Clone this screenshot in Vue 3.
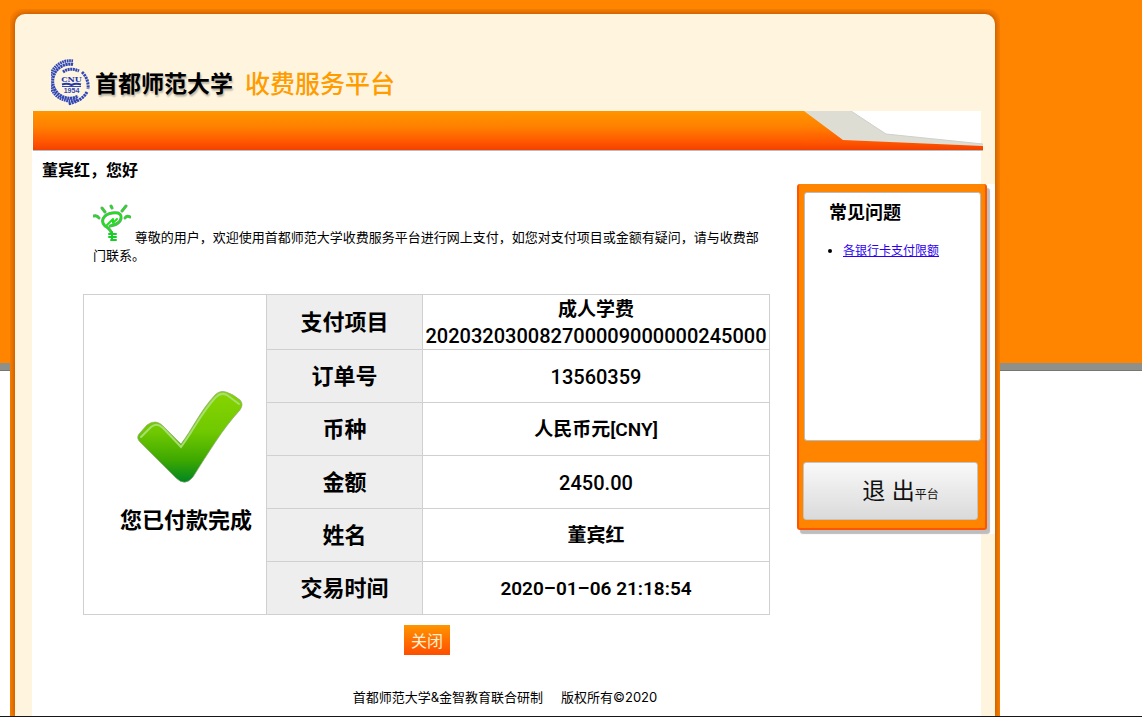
<script setup>
const rows = [
  { label: '支付项目', lines: ['成人学费', '202032030082700009000000245000'] },
  { label: '订单号', lines: ['13560359'] },
  { label: '币种', lines: ['人民币元[CNY]'] },
  { label: '金额', lines: ['2450.00'] },
  { label: '姓名', lines: ['董宾红'] },
  { label: '交易时间', lines: ['2020–01–06 21:18:54'] },
]

const isNumber = (line) => /^[\d.]+$/.test(line)
</script>

<template>
  <div class="page" lang="zh-CN">
    <div class="frame">
      <div class="paper">
        <header class="brand">
          <svg class="seal" viewBox="0 0 40 50" aria-hidden="true">
            <g fill="none" stroke="#3147b5">
              <path d="M22 4A20 20 0 1 0 27 42" stroke-width="3" stroke-dasharray="1.700 .6" />
              <path d="M22 7.500A17 17 0 1 0 27 39" stroke-width="3" stroke-dasharray="2.200 .5" />
              <path d="M12 15Q19 10 28 14" stroke-width="3" stroke-dasharray="2 .6" />
              <path d="M31 15Q38 22 37 32" stroke-width="3" stroke-dasharray="2.200 .8" />
              <path d="M36 35Q31 44 17 47" stroke-width="3" stroke-dasharray="2.200 .7" />
              <path d="M11 27.500Q16 26 20.500 28Q25 26 30 27.500" stroke="#2138ab" stroke-width="2" />
              <path d="M11 29.500h19" stroke-width="1" />
            </g>
            <text class="seal-name" x="20.500" y="25" text-anchor="middle">CNU</text>
            <text class="seal-year" x="20.500" y="36" text-anchor="middle">1954</text>
          </svg>
          <span class="school">首都师范大学</span>
          <span class="platform">收费服务平台</span>
        </header>

        <div class="sheet">
          <div class="band">
            <svg class="ribbon" viewBox="0 0 180 42" preserveAspectRatio="none" aria-hidden="true">
              <defs>
                <linearGradient id="band-fill" x1="0" y1="0" x2="0" y2="39" gradientUnits="userSpaceOnUse">
                  <stop offset="0" stop-color="#ff9500" />
                  <stop offset=".4" stop-color="#ff8000" />
                  <stop offset=".8" stop-color="#ff5600" />
                  <stop offset="1" stop-color="#f24100" />
                </linearGradient>
              </defs>
              <path d="M0 0H178V42H0z" fill="#fff" />
              <path d="M178 0H180V42H178z" fill="#fff5df" />
              <path d="M0 0H48L83 23L180 33V36H0z" fill="#deddd3" />
              <path d="M48 0L83 23L180 33" fill="none" stroke="#cfcfcb" />
              <path d="M0 39H180V40H0z" fill="#b9bcc0" />
              <path d="M0 0H1L40 29L180 35V39H0z" fill="url(#band-fill)" />
            </svg>
          </div>

          <div class="columns">
            <main class="main">
              <h1 class="greeting">董宾红，您好</h1>
              <p class="notice">
                <svg class="bulb" viewBox="0 0 38 38" aria-hidden="true">
                  <g fill="none" stroke-linecap="round" stroke-linejoin="round">
                    <g stroke="#7d9a85" stroke-width="3">
                      <path d="M1 12Q4 11 6 14M9 4L12 8M18 2L19 4M33 2L29 7M32 14Q34 11 37 13" />
                      <path d="M18 28Q17 25 12 22Q7 17 12 12Q17 8 25 9Q30 11 27 17Q24 21 17 22" />
                    </g>
                    <g stroke="#20e01e" stroke-width="2">
                      <path d="M1 12Q4 11 6 14M9 4L12 8M18 2L19 4M33 2L29 7M32 14Q34 11 37 13" />
                      <path d="M18 28Q17 25 12 22Q7 17 12 12Q17 8 25 9Q30 11 27 17Q24 21 17 22" />
                      <path d="M14 21L20 15V19L24 15" />
                      <path d="M16 30h7M16 33h7M18 36h5M19 28v8" stroke="#16cf26" />
                    </g>
                  </g>
                </svg>
                尊敬的用户，欢迎使用首都师范大学收费服务平台进行网上支付，如您对支付项目或金额有疑问，请与收费部门联系。
              </p>

              <table class="receipt">
                <colgroup>
                  <col class="col-status" />
                  <col class="col-label" />
                  <col />
                </colgroup>
                <tbody>
                  <tr v-for="(row, i) in rows" :key="row.label">
                    <td v-if="i === 0" class="status" :rowspan="rows.length">
                      <svg class="check" viewBox="-4 0 128 110" aria-hidden="true">
                        <defs>
                          <linearGradient id="check-fill" x1="0" y1="0" x2="0" y2="1">
                            <stop offset="0" stop-color="#88d500" />
                            <stop offset=".45" stop-color="#6fc800" />
                            <stop offset=".75" stop-color="#3fa900" />
                            <stop offset="1" stop-color="#008522" />
                          </linearGradient>
                        </defs>
                        <path d="M13 44Q10 48 14 52L50 88Q59 97 67 87C81 65 97 38 114 20Q118 14 114 10Q107 4 100 2Q94 0 89 5C74 21 66 40 55 54L38 37Q30 28 21 35Z" fill="url(#check-fill)" stroke="#8fa675" stroke-width=".7" />
                        <path d="M15 47L25 37Q31 32 37 38L55 57C69 38 75 23 90 7Q95 2 101 5L113 14" fill="none" stroke="#a7df70" stroke-width="2" stroke-linecap="round" />
                      </svg>
                      <div>您已付款完成</div>
                    </td>
                    <th class="label" scope="row">{{ row.label }}</th>
                    <td class="value">
                      <div v-for="line in row.lines" :key="line" :class="{ number: isNumber(line) }">{{ line }}</div>
                    </td>
                  </tr>
                </tbody>
              </table>
              <button class="close" type="button">关闭</button>
            </main>

            <aside class="side">
              <div class="panel">
                <section class="faq">
                  <h2>常见问题</h2>
                  <ul>
                    <li><a href="#">各银行卡支付限额</a></li>
                  </ul>
                </section>
                <button class="exit" type="button">退 出<small>平台</small></button>
              </div>
            </aside>
          </div>

          <footer class="footer">
            <span>首都师范大学&amp;金智教育联合研制</span>
            <span>版权所有©2020</span>
          </footer>
        </div>
      </div>
    </div>
  </div>
</template>

<style>
body {
  margin: 0;
}
</style>

<style scoped>
.page {
  box-sizing: border-box;
  min-height: 100vh;
  display: flex;
  padding: 9px 10px 0;
  border-bottom: 1px solid #15151c;
  background: linear-gradient(#ff8400 363px, #90908a 363px, #90908a 370px, #777771 370px, #777771 371px, #fff 371px);
  font-family: Inter, "Noto Sans CJK SC", sans-serif;
  color: #000;
}
.frame {
  box-sizing: border-box;
  display: flex;
  flex: 1;
  max-width: 990px;
  padding: 5px 5px 0;
  border-radius: 12px 12px 0 0;
  background: #fb8100;
  overflow: hidden;
}
.paper {
  box-sizing: border-box;
  flex: 1;
  display: flex;
  flex-direction: column;
  padding: 0 14px 0 17px;
  border-radius: 10px 10px 0 0;
  background: #fff5df;
  box-shadow: 0 0 6px 1px #b85000;
}
.brand {
  box-sizing: border-box;
  height: 97px;
  display: flex;
  align-items: center;
  padding: 38px 0 0 19px;
}
.seal {
  width: 40px;
  height: 50px;
  margin-right: 4px;
}
.seal-name {
  font: bold 8px "DejaVu Serif", serif;
  fill: #2138ab;
}
.seal-year {
  font: bold 7px "Liberation Sans", sans-serif;
  fill: #3147b5;
}
.school {
  font-size: 23px;
  font-weight: 700;
  text-shadow: 1px 2px 2px #b5b0a4;
}
.platform {
  margin-left: 12px;
  font-size: 25px;
  font-weight: 500;
  color: #ff9c00;
}
.sheet {
  flex: 1;
  background: #fff;
}
.band {
  height: 42px;
  display: flex;
  justify-content: flex-end;
  margin: 0 -2px 0 1px;
  background: linear-gradient(#ff9500 0, #ff8000 16px, #ff5600 31px, #f24100 39px, #b9bcc0 39px, #b9bcc0 40px, #fff 40px);
}
.ribbon {
  width: 180px;
  height: 42px;
}
.columns {
  display: flex;
  align-items: flex-start;
}
.main {
  flex: 1;
  min-width: 0;
  display: flex;
  flex-direction: column;
}
.greeting {
  margin: 5px 10px 0;
  font-size: 16px;
  line-height: 24px;
}
.notice {
  margin: 22px 27px 0 61px;
  font-size: 13px;
  line-height: 18px;
}
.bulb {
  width: 38px;
  height: 38px;
}
.receipt {
  width: calc(100% - 78px);
  margin: 30px 0 0 51px;
  border-collapse: collapse;
  table-layout: fixed;
  font-weight: 600;
}
.col-status {
  width: 183px;
}
.col-label {
  width: 156px;
}
.receipt td,
.receipt th {
  height: 52px;
  padding: 0;
  border: 1px solid #d0d0d0;
  text-align: center;
}
.receipt .status {
  padding-left: 22px;
  font-size: 22px;
  line-height: 32px;
}
.check {
  display: block;
  width: 128px;
  height: 110px;
  margin: 17px auto 4px;
}
.receipt .label {
  height: 48px;
  padding-bottom: 4px;
  background: #eee;
  font-size: 22px;
  font-weight: 600;
}
.receipt .value {
  height: 50px;
  padding-top: 2px;
  font-family: Roboto, "Noto Sans CJK SC", sans-serif;
  font-size: 19px;
  line-height: 26px;
}
.value .number {
  font-size: 20px;
  font-weight: 500;
}
.close {
  align-self: center;
  height: 30px;
  margin: 10px 0 0 25px;
  padding: 0 7px;
  border: 0;
  background: linear-gradient(#ff9500, #ff4d00);
  font: inherit;
  font-size: 16px;
  color: #fff0d5;
}
.side {
  width: 198px;
  margin: 31px -14px 0 0;
  background: #fff;
}
.panel {
  box-sizing: border-box;
  width: 190px;
  height: 346px;
  display: flex;
  flex-direction: column;
  margin-bottom: 4px;
  padding: 8px 4px 8px 5px;
  border-style: solid;
  border-width: 0 2px 2px;
  border-color: #ff5500;
  border-radius: 3px;
  background: #ff8400;
  box-shadow: 3px 4px 1px #bdbdbd;
}
.faq {
  box-sizing: border-box;
  height: 249px;
  border: 1px solid #bbb;
  border-radius: 3px;
  background: #fff;
}
.faq h2 {
  margin: 7px 24px 0;
  font-size: 18px;
  line-height: 26px;
}
.faq ul {
  margin: 15px 0 0;
  padding-left: 38px;
  font-size: 12px;
  line-height: 20px;
}
.faq a {
  color: #2b00f0;
}
.exit {
  width: 175px;
  height: 58px;
  margin: 21px 0 0 -1px;
  padding: 0 0 4px 20px;
  border: 1px solid #c4c4c4;
  border-radius: 3px;
  background: linear-gradient(#f9f9f9, #dadada);
  font: inherit;
  font-size: 23px;
  color: #111;
}
.exit small {
  font-size: 12px;
}
.footer {
  display: flex;
  justify-content: center;
  gap: 18px;
  padding: 32px 3px 4px 0;
  font-size: 13px;
  line-height: 20px;
}
</style>
